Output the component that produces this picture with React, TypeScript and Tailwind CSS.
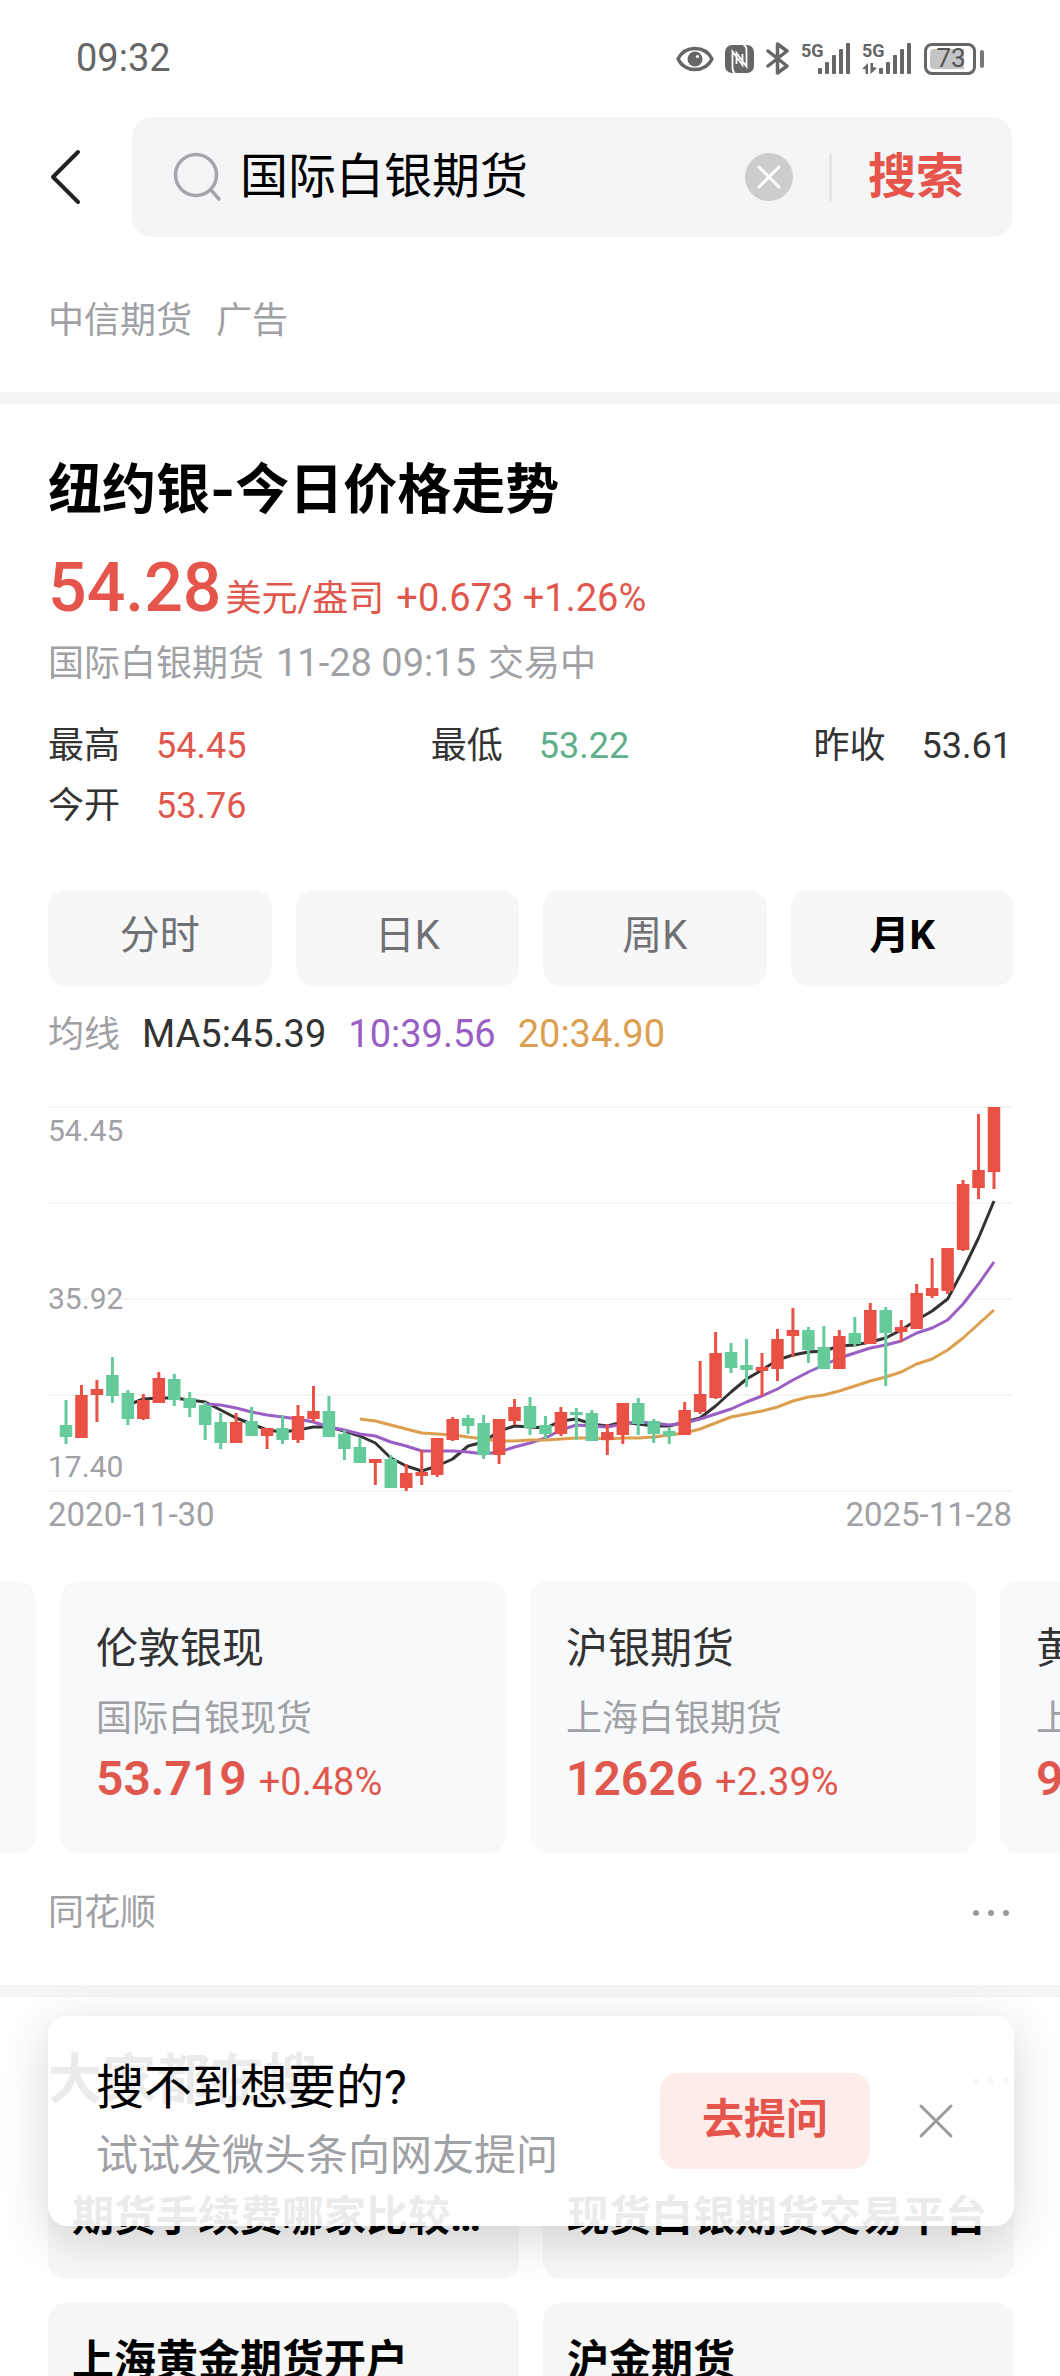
import { useState } from "react";

type Candle = [up: 0 | 1, high: number, top: number, bottom: number, low: number];

const CANDLES: Candle[] = [
  [0, 293, 318, 330, 337],
  [1, 278, 288, 331, 331],
  [1, 273, 282, 288, 315],
  [0, 250, 268, 289, 296],
  [0, 283, 286, 312, 318],
  [1, 287, 293, 312, 313],
  [1, 265, 271, 296, 296],
  [0, 267, 272, 293, 299],
  [0, 285, 291, 301, 310],
  [0, 295, 298, 318, 333],
  [0, 306, 315, 336, 342],
  [1, 306, 315, 336, 336],
  [0, 300, 314, 329, 329],
  [1, 321, 321, 329, 342],
  [0, 308, 321, 333, 337],
  [1, 298, 309, 333, 336],
  [1, 279, 304, 312, 315],
  [0, 289, 304, 330, 330],
  [0, 323, 327, 342, 353],
  [0, 331, 340, 356, 356],
  [1, 352, 352, 356, 378],
  [0, 348, 352, 381, 381],
  [1, 357, 366, 381, 384],
  [1, 343, 365, 369, 378],
  [1, 331, 331, 368, 370],
  [1, 310, 312, 333, 334],
  [0, 308, 311, 319, 327],
  [0, 308, 316, 348, 352],
  [1, 312, 312, 348, 357],
  [1, 292, 300, 314, 318],
  [0, 290, 299, 321, 328],
  [0, 309, 318, 327, 332],
  [1, 300, 305, 327, 329],
  [0, 301, 305, 308, 333],
  [0, 303, 306, 334, 334],
  [1, 317, 325, 333, 348],
  [1, 296, 296, 328, 337],
  [0, 291, 296, 317, 328],
  [0, 312, 314, 327, 336],
  [0, 321, 324, 329, 337],
  [1, 295, 303, 328, 328],
  [1, 254, 287, 305, 307],
  [1, 225, 246, 291, 292],
  [0, 236, 245, 261, 266],
  [0, 232, 258, 263, 280],
  [1, 246, 260, 264, 289],
  [1, 222, 232, 262, 274],
  [1, 201, 223, 229, 250],
  [0, 220, 223, 243, 256],
  [0, 219, 240, 262, 262],
  [1, 223, 229, 262, 262],
  [0, 210, 226, 237, 239],
  [1, 196, 203, 237, 237],
  [0, 200, 203, 226, 279],
  [1, 213, 220, 225, 235],
  [1, 177, 186, 222, 222],
  [1, 151, 181, 189, 191],
  [1, 141, 141, 184, 187],
  [1, 73, 77, 143, 144],
  [1, 7, 63, 81, 92],
  [1, 0, 0, 65, 82],
];

const AVERAGES = [
  {
    color: "#333333",
    start: 4,
    values: [
      298, 292, 291, 291, 293, 295, 303, 311, 317, 323, 325, 323, 320, 320, 324,
      329, 336, 351, 359, 364, 359, 352, 339, 335, 324, 319, 320, 321, 314, 312,
      317, 319, 315, 317, 319, 319, 315, 311, 299, 285, 272, 263, 253, 248, 245,
      244, 239, 238, 235, 231, 223, 213, 204, 192, 163, 131, 94,
    ],
  },
  {
    color: "#9a5fc4",
    start: 9,
    values: [
      297, 298, 301, 305, 308, 310, 312, 315, 320, 323, 327, 329, 335, 339, 344,
      344, 344, 345, 347, 345, 340, 336, 331, 323, 318, 319, 320, 317, 315, 316,
      318, 316, 312, 307, 302, 295, 289, 282, 273, 265, 258, 251, 246, 241, 238,
      234, 226, 221, 213, 197, 177, 155,
    ],
  },
  {
    color: "#dc9f4f",
    start: 19,
    values: [
      312, 314, 318, 322, 326, 327, 328, 330, 332, 334, 334, 333, 333, 332, 331,
      331, 332, 331, 331, 330, 328, 326, 322, 316, 310, 307, 304, 300, 294, 290,
      288, 284, 279, 274, 270, 265, 257, 252, 243, 231, 217, 203,
    ],
  },
];

const STATS = [
  { label: "最高", value: "54.45", color: "text-[#e0584d]" },
  { label: "最低", value: "53.22", color: "text-[#5fb08a]" },
  { label: "昨收", value: "53.61", color: "text-[#333333]" },
  { label: "今开", value: "53.76", color: "text-[#e0584d]" },
];

const TABS = ["分时", "日K", "周K", "月K"];

const QUOTES = [
  { name: "纽约银", desc: "国际白银期货", price: "54.28", change: "+1.26%" },
  { name: "伦敦银现", desc: "国际白银现货", price: "53.719", change: "+0.48%" },
  { name: "沪银期货", desc: "上海白银期货", price: "12626", change: "+2.39%" },
  { name: "黄金期货", desc: "上海黄金期货", price: "953.92", change: "+0.66%" },
];

const RELATED = [
  "期货手续费哪家比较便宜",
  "现货白银期货交易平台",
  "上海黄金期货开户",
  "沪金期货",
];

const candleX = (i: number) => 18 + (i * 928) / 60;

const Signal = ({ data = false }: { data?: boolean }) => (
  <svg width="50" height="32" viewBox="0 0 50 32" fill="#666666">
    <text
      x="0"
      y="14"
      fontSize="18"
      fontWeight="700"
      fontFamily="Liberation Sans Narrow, Roboto, sans-serif"
    >
      5G
    </text>
    <rect x="17" y="25" width="4" height="6" rx="1" />
    <rect x="24" y="19" width="4" height="12" rx="1" />
    <rect x="31" y="12" width="4" height="19" rx="1" />
    <rect x="38" y="6" width="4" height="25" rx="1" />
    <rect x="45" y="0" width="4" height="31" rx="1" />
    {data && <path d="M0 26L6 20V31H3.500V26ZM8.500 20H11V24L15 25L8.500 31Z" />}
  </svg>
);

const StatusBar = () => (
  <div className="flex h-[117px] items-center justify-between px-[76px]">
    <span className="text-[38px] text-[#666666]">09:32</span>
    <div className="flex items-center">
      <svg width="38" height="26" viewBox="0 0 38 26">
        <path
          d="M2 13C9 -1 29 -1 36 13C29 27 9 27 2 13Z"
          fill="none"
          stroke="#666666"
          strokeWidth="3.5"
          strokeLinejoin="round"
        />
        <circle cx="19" cy="13" r="7.5" fill="#666666" />
        <circle cx="21.5" cy="10.5" r="1.6" fill="#ffffff" />
      </svg>
      <svg className="ml-[11px]" width="29" height="28" viewBox="0 0 29 28">
        <rect width="29" height="28" rx="7" fill="#666666" />
        <path
          d="M10 28C7.5 26.500 7.500 25 7.500 22V6.500L17.500 20V9M18.500 0C21.500 1.500 21.500 3 21.500 6V21.500L11.500 8V19"
          fill="none"
          stroke="#ffffff"
          strokeWidth="1.8"
        />
      </svg>
      <svg className="ml-3" width="23" height="33" viewBox="0 0 23 33">
        <path
          d="M2 9L21 24L11.500 31V2L21 9L2 24"
          fill="none"
          stroke="#666666"
          strokeWidth="3.5"
          strokeLinejoin="round"
          strokeLinecap="round"
        />
      </svg>
      <div className="ml-3 flex gap-[11px]">
        <Signal />
        <Signal data />
      </div>
      <div className="ml-3 flex items-center gap-1">
        <div className="flex h-8 w-[52px] items-center rounded-lg border-3 border-[#666666] p-[3px]">
          <div className="flex h-full w-[34px] items-center justify-center rounded-l bg-[#c4c4c4] pl-2 text-[26px] text-[#555555]">
            73
          </div>
        </div>
        <div className="h-[18px] w-1 rounded-sm bg-[#777777]" />
      </div>
    </div>
  </div>
);

const SearchHeader = () => {
  const [query, setQuery] = useState("国际白银期货");

  return (
    <header className="flex items-center pr-12">
      <button aria-label="返回" className="flex w-[132px] items-center pl-[49px]">
        <svg width="34" height="56" viewBox="0 0 34 56" fill="none">
          <path
            d="M29 3L4 28L29 53"
            stroke="#222222"
            strokeWidth="4"
            strokeLinecap="round"
            strokeLinejoin="round"
          />
        </svg>
      </button>
      <div className="flex h-[120px] min-w-0 flex-1 items-center rounded-[20px] bg-[#f4f5f7] pl-[41px]">
        <svg className="shrink-0" width="50" height="50" viewBox="0 0 50 50" fill="none">
          <circle cx="23" cy="23" r="20.5" stroke="#a5a6a9" strokeWidth="3.5" />
          <path
            d="M38 38L46 47"
            stroke="#a5a6a9"
            strokeWidth="3.5"
            strokeLinecap="round"
          />
        </svg>
        <input
          aria-label="搜索内容"
          className="ml-[17px] min-w-0 flex-1 bg-transparent text-[48px] leading-[72px] text-black outline-none"
          value={query}
          onChange={(e) => setQuery(e.target.value)}
        />
        <button
          aria-label="清除"
          className="flex size-12 shrink-0 items-center justify-center rounded-full bg-[#cccdcf]"
          onClick={() => setQuery("")}
        >
          <svg width="24" height="24" viewBox="0 0 24 24">
            <path
              d="M2 2L22 22M22 2L2 22"
              stroke="#ffffff"
              strokeWidth="3"
              strokeLinecap="round"
            />
          </svg>
        </button>
        <div className="ml-9 h-12 w-[3px] bg-[#e5e6e8]" />
        <button className="pl-9 pr-12 text-[48px] font-bold leading-[72px] text-[#e6554b]">
          搜索
        </button>
      </div>
    </header>
  );
};

const KLineChart = () => (
  <div>
    <div className="relative">
      <svg className="block w-full" viewBox="0 0 964 384" overflow="visible">
        {[0, 96, 192, 288, 384].map((y) => (
          <path key={y} d={`M0 ${y}H964`} stroke="#f5f5f5" strokeWidth="2" />
        ))}
        {AVERAGES.map(({ color, start, values }) => (
          <polyline
            key={color}
            points={values.map((y, i) => `${candleX(start + i)},${y}`).join(" ")}
            fill="none"
            stroke={color}
            strokeWidth="3"
            strokeLinejoin="round"
          />
        ))}
        {CANDLES.map(([up, high, top, bottom, low], i) => (
          <g key={i} fill={up ? "#ea5145" : "#66cb9b"}>
            <rect x={candleX(i) - 1.5} y={high} width="3" height={low - high} />
            <rect x={candleX(i) - 6.25} y={top} width="12.5" height={bottom - top} />
          </g>
        ))}
      </svg>
      <div className="absolute inset-0 flex flex-col justify-between text-3xl text-[#a0a1a4]">
        <span className="leading-[48px]">54.45</span>
        <span className="leading-[48px]">35.92</span>
        <span className="leading-[48px]">17.40</span>
      </div>
    </div>
    <div className="flex justify-between text-[33px] leading-[48px] text-[#a0a1a4]">
      <span>2020-11-30</span>
      <span>2025-11-28</span>
    </div>
  </div>
);

const Dots = () => (
  <button aria-label="更多" className="flex w-9 justify-between">
    <span className="size-[6px] rounded-full bg-[#9a9a9a]" />
    <span className="size-[6px] rounded-full bg-[#9a9a9a]" />
    <span className="size-[6px] rounded-full bg-[#9a9a9a]" />
  </button>
);

const PriceCard = () => {
  const [tab, setTab] = useState("月K");

  return (
    <section className="pt-[50px]">
      <div className="px-12">
        <h2 className="font-['Inter','Noto_Sans_CJK_SC',sans-serif] text-[54px] font-bold leading-[72px] text-black">
          纽约银-今日价格走势
        </h2>
        <p className="mt-[22px] flex items-baseline leading-[80px] text-[#e0584d]">
          <span className="text-[68px] font-medium text-[#e6554b]">54.28</span>
          <span className="ml-1 text-[36px]">美元/盎司</span>
          <span className="ml-3 text-[38px]">+0.673 +1.26%</span>
        </p>
        <p className="flex items-baseline gap-3 text-[36px] leading-[48px] text-[#a0a1a4]">
          <span>国际白银期货</span>
          <span className="text-[38px]">11-28 09:15</span>
          <span>交易中</span>
        </p>
        <dl className="mt-7 grid grid-cols-[auto_auto_auto] justify-between text-[36px] leading-[60px]">
          {STATS.map(({ label, value, color }) => (
            <div key={label} className="flex items-baseline gap-9">
              <dt className="text-[#333333]">{label}</dt>
              <dd className={color}>{value}</dd>
            </div>
          ))}
        </dl>
      </div>
      <div className="mt-[54px] grid grid-cols-4 gap-6 pl-12 pr-[46px]">
        {TABS.map((name) => (
          <button
            key={name}
            onClick={() => setTab(name)}
            className={`h-24 rounded-[18px] bg-[#f7f7f7] pb-1 text-[40px] ${
              tab === name ? "font-bold text-black" : "text-[#707175]"
            }`}
          >
            {name}
          </button>
        ))}
      </div>
      <div className="px-12">
        <p className="mb-12 mt-6 flex items-baseline gap-[22px] text-[38px] leading-[48px]">
          <span className="text-[36px] text-[#a0a1a4]">均线</span>
          <span className="text-[#333333]">MA5:45.39</span>
          <span className="text-[#9a5fc4]">10:39.56</span>
          <span className="text-[#dc9f4f]">20:34.90</span>
        </p>
        <KLineChart />
      </div>
      <div className="mt-[42px] overflow-hidden">
        <div className="-ml-[410px] flex gap-6">
          {QUOTES.map(({ name, desc, price, change }) => (
            <a
              key={name}
              href="#"
              className="h-[272px] w-[446px] shrink-0 rounded-[18px] bg-[#f8f9fb] px-9 pt-[38px]"
            >
              <p className="text-[42px] leading-[60px] text-[#333333]">{name}</p>
              <p className="mt-4 text-[36px] leading-[48px] text-[#a0a1a4]">{desc}</p>
              <p className="flex items-baseline gap-3 leading-[72px] text-[#e0584d]">
                <span className="text-[48px] font-semibold">{price}</span>
                <span className="text-[38px]">{change}</span>
              </p>
            </a>
          ))}
        </div>
      </div>
      <div className="flex h-[132px] items-center justify-between pb-3 pl-12 pr-[51px]">
        <a href="#" className="text-[36px] leading-[48px] text-[#a0a1a4]">
          同花顺
        </a>
        <Dots />
      </div>
    </section>
  );
};

const Related = () => (
  <section className="pl-12 pr-[46px] pt-12">
    <div className="flex items-center justify-between pr-[5px]">
      <h2 className="text-[54px] font-bold leading-[72px] text-black">大家都在搜</h2>
      <Dots />
    </div>
    <div className="mt-[42px] grid grid-cols-2 gap-6">
      {RELATED.map((word) => (
        <a
          key={word}
          href="#"
          className="h-[120px] truncate rounded-[18px] bg-[#f7f7f7] px-6 text-[42px] font-bold leading-[116px] text-black"
        >
          {word}
        </a>
      ))}
    </div>
  </section>
);

const AskPopup = ({ onClose }: { onClose: () => void }) => (
  <div className="absolute bottom-[150px] left-12 right-[46px] flex h-[210px] items-center rounded-[20px] bg-white/92 pl-12 pr-[60px] shadow-[0_12px_48px_rgba(0,0,0,0.16)]">
    <div className="flex-1 pb-1">
      <p className="text-[48px] leading-[72px] text-black">搜不到想要的?</p>
      <p className="mt-0.5 text-[42px] leading-[60px] text-[#a0a1a4]">
        试试发微头条向网友提问
      </p>
    </div>
    <button className="h-24 w-[210px] rounded-[18px] bg-[#fdecea] pb-1 text-[42px] font-bold text-[#e6554b]">
      去提问
    </button>
    <button aria-label="关闭" className="ml-12" onClick={onClose}>
      <svg width="36" height="36" viewBox="0 0 36 36">
        <path
          d="M3 3L33 33M33 3L3 33"
          stroke="#999a9d"
          strokeWidth="3"
          strokeLinecap="round"
        />
      </svg>
    </button>
  </div>
);

const App = () => {
  const [showAsk, setShowAsk] = useState(true);

  return (
    <div className="relative h-screen overflow-hidden bg-white font-['Roboto','Noto_Sans_CJK_SC',sans-serif]">
      <StatusBar />
      <SearchHeader />
      <a
        href="#"
        className="flex h-[155px] items-center gap-6 px-12 pt-3 text-[36px] leading-[48px] text-[#a0a1a4]"
      >
        <span>中信期货</span>
        <span>广告</span>
      </a>
      <div className="h-3 bg-[#f4f5f7]" />
      <PriceCard />
      <div className="h-3 bg-[#f4f5f7]" />
      <Related />
      {showAsk && <AskPopup onClose={() => setShowAsk(false)} />}
    </div>
  );
};

export default App;
